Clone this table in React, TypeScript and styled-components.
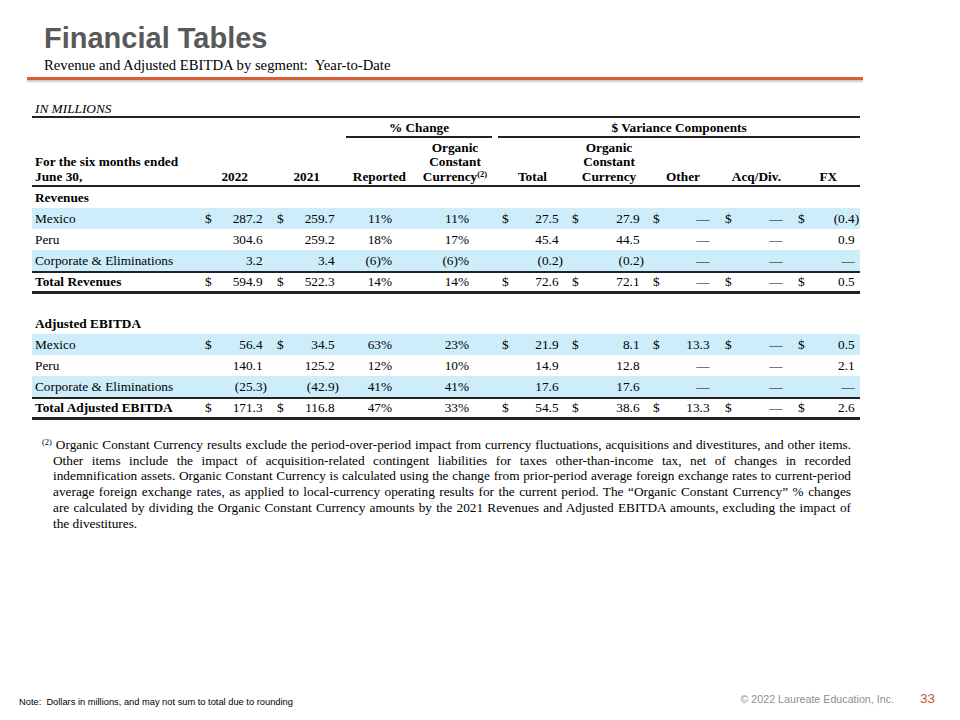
import React from "react";
import styled, { createGlobalStyle } from "styled-components";

const GlobalStyle = createGlobalStyle`
  body {
    margin: 0;
    background: #ffffff;
  }
`;

const Slide = styled.div`
  width: 960px;
  height: 720px;
  display: flex;
  flex-direction: column;
  font-family: "Liberation Serif", "Times New Roman", serif;
  color: #000;
  overflow: hidden;
  background: #fff;
`;

const Header = styled.header`
  padding: 22px 0 0 44px;
`;

const Title = styled.h1`
  margin: 0;
  font-family: "Liberation Sans", Arial, sans-serif;
  font-size: 29px;
  font-weight: 700;
  line-height: 33px;
  color: #595959;
`;

const Subtitle = styled.div`
  margin-top: 2px;
  font-size: 14.7px;
  line-height: 17px;
  white-space: pre;
`;

const Rule = styled.div`
  margin: 3px 97px 0 27px;
  height: 3px;
  background: #d65f35;
  box-shadow: 0 2px 2px rgba(0, 0, 0, 0.22);
`;

const Content = styled.main`
  padding: 21px 0 0 32px;
`;

const Units = styled.div`
  padding-left: 3px;
  font-size: 13.3px;
  line-height: 15px;
  font-style: italic;
`;

const Table = styled.table`
  width: 828px;
  table-layout: fixed;
  border-collapse: separate;
  border-spacing: 0;
  border-top: 2px solid #222;
  font-size: 13.3px;

  td,
  th {
    padding: 0;
  }
`;

const GroupCell = styled.th`
  height: 20px;
  vertical-align: bottom;
`;

const GroupLabel = styled.div<{ $inset: number }>`
  margin-left: ${(p) => p.$inset}px;
  border-bottom: 2px solid #222;
  text-align: center;
  font-weight: 700;
  line-height: 17px;
`;

const HeadCell = styled.th<{
  $align?: "left" | "right" | "center";
  $pr?: number;
  $pl?: number;
}>`
  height: 46px;
  vertical-align: bottom;
  text-align: ${(p) => p.$align || "right"};
  padding-right: ${(p) => p.$pr || 0}px !important;
  padding-left: ${(p) => p.$pl || 0}px !important;
  padding-bottom: 1px !important;
  font-weight: 700;
  line-height: 14.5px;
  border-bottom: 2px solid #222;
  white-space: nowrap;
`;

const Sup = styled.sup`
  font-size: 8.5px;
  line-height: 0;
  vertical-align: 4px;
`;

const BodyRow = styled.tr<{ $band?: boolean; $total?: boolean }>`
  background: ${(p) => (p.$band ? "#cdedfb" : "transparent")};

  td {
    line-height: ${(p) => (p.$total ? "18px" : "21px")};
    border-top: ${(p) => (p.$total ? "2px solid #222" : "0")};
    border-bottom: ${(p) => (p.$total ? "3px solid #222" : "0")};
  }
`;

const SpacerRow = styled.tr`
  height: 19px;
`;

const Label = styled.td<{ $bold?: boolean }>`
  padding-left: 3px !important;
  font-weight: ${(p) => (p.$bold ? 700 : 400)};
  white-space: nowrap;
`;

const Dollar = styled.td<{ $pl: number }>`
  padding-left: ${(p) => p.$pl}px !important;
  text-align: left;
`;

const Num = styled.td<{ $pr: number }>`
  padding-right: ${(p) => p.$pr}px !important;
  text-align: right;
  white-space: nowrap;
`;

const Hidden = styled.span`
  visibility: hidden;
`;

const Footnote = styled.div`
  margin: 17px 0 0 21px;
  width: 798px;
  font-size: 13.3px;
  line-height: 15.7px;
`;

const FootLine = styled.div<{ $last?: boolean; $first?: boolean }>`
  text-align: justify;
  text-align-last: ${(p) => (p.$last ? "left" : "justify")};
  text-indent: ${(p) => (p.$first ? "-11px" : "0")};
  white-space: nowrap;
`;

const FootSup = styled.sup`
  font-size: 8.5px;
  line-height: 0;
  vertical-align: 4px;
`;

const Footer = styled.footer`
  margin-top: auto;
  display: flex;
  align-items: flex-end;
  padding: 0 25px 0 19px;
  font-family: "Liberation Sans", Arial, sans-serif;
`;

const Note = styled.div`
  font-size: 9.3px;
  line-height: 11px;
  margin-bottom: 12px;
  white-space: pre;
`;

const Copyright = styled.div`
  margin-left: auto;
  font-size: 10.7px;
  line-height: 12px;
  margin-bottom: 15px;
  color: #8f8f8f;
`;

const PageNum = styled.div`
  margin-left: 26px;
  font-size: 13.5px;
  line-height: 15px;
  margin-bottom: 14px;
  color: #c9512b;
`;

type Col = { dollarPad?: number; pad: number; pct?: boolean };

const cols: Col[] = [
  { dollarPad: 5, pad: 2 },
  { dollarPad: 8, pad: 2 },
  { pad: 18, pct: true },
  { pad: 23, pct: true },
  { dollarPad: 10, pad: 2 },
  { dollarPad: 7, pad: 1 },
  { dollarPad: 8, pad: 4 },
  { dollarPad: 7, pad: 3 },
  { dollarPad: 8, pad: 1 },
];

const widths = [168, 28, 41, 33, 39, 69, 82, 38, 35, 35, 45, 35, 38, 34, 38, 30, 40];

type Line = {
  label: string;
  band?: boolean;
  total?: boolean;
  dollars?: boolean;
  values: string[];
};

const D = "\u2014";

const revenues: Line[] = [
  {
    label: "Mexico",
    band: true,
    dollars: true,
    values: ["287.2", "259.7", "11%", "11%", "27.5", "27.9", D, D, "(0.4)"],
  },
  {
    label: "Peru",
    values: ["304.6", "259.2", "18%", "17%", "45.4", "44.5", D, D, "0.9"],
  },
  {
    label: "Corporate & Eliminations",
    band: true,
    values: ["3.2", "3.4", "(6)%", "(6)%", "(0.2)", "(0.2)", D, D, D],
  },
  {
    label: "Total Revenues",
    total: true,
    dollars: true,
    values: ["594.9", "522.3", "14%", "14%", "72.6", "72.1", D, D, "0.5"],
  },
];

const ebitda: Line[] = [
  {
    label: "Mexico",
    band: true,
    dollars: true,
    values: ["56.4", "34.5", "63%", "23%", "21.9", "8.1", "13.3", D, "0.5"],
  },
  {
    label: "Peru",
    values: ["140.1", "125.2", "12%", "10%", "14.9", "12.8", D, D, "2.1"],
  },
  {
    label: "Corporate & Eliminations",
    band: true,
    values: ["(25.3)", "(42.9)", "41%", "41%", "17.6", "17.6", D, D, D],
  },
  {
    label: "Total Adjusted EBITDA",
    total: true,
    dollars: true,
    values: ["171.3", "116.8", "47%", "33%", "54.5", "38.6", "13.3", D, "2.6"],
  },
];

const renderValue = (v: string, pct?: boolean) => {
  if (pct || v.endsWith(")")) return v;
  return (
    <>
      {v}
      <Hidden>)</Hidden>
    </>
  );
};

const DataRow = ({ line }: { line: Line }) => (
  <BodyRow $band={line.band} $total={line.total}>
    <Label $bold={line.total}>{line.label}</Label>
    {cols.map((c, i) => (
      <React.Fragment key={i}>
        {c.dollarPad !== undefined && (
          <Dollar $pl={c.dollarPad}>{line.dollars ? "$" : ""}</Dollar>
        )}
        <Num $pr={c.pad}>{renderValue(line.values[i], c.pct)}</Num>
      </React.Fragment>
    ))}
  </BodyRow>
);

const SectionRow = ({ title }: { title: string }) => (
  <BodyRow>
    <Label $bold colSpan={17}>
      {title}
    </Label>
  </BodyRow>
);

const footLines = [
  "Organic Constant Currency results exclude the period-over-period impact from currency fluctuations, acquisitions and divestitures, and other items.",
  "Other items include the impact of acquisition-related contingent liabilities for taxes other-than-income tax, net of changes in recorded",
  "indemnification assets. Organic Constant Currency is calculated using the change from prior-period average foreign exchange rates to current-period",
  "average foreign exchange rates, as applied to local-currency operating results for the current period. The \u201cOrganic Constant Currency\u201d % changes",
  "are calculated by dividing the Organic Constant Currency amounts by the 2021 Revenues and Adjusted EBITDA amounts, excluding the impact of",
  "the divestitures.",
];

export default function App() {
  return (
    <Slide>
      <GlobalStyle />
      <Header>
        <Title>Financial Tables</Title>
        <Subtitle>Revenue and Adjusted EBITDA by segment:  Year-to-Date</Subtitle>
      </Header>
      <Rule />

      <Content>
        <Units>IN MILLIONS</Units>
        <Table>
          <colgroup>
            {widths.map((w, i) => (
              <col key={i} style={{ width: w }} />
            ))}
          </colgroup>
          <thead>
            <tr>
              <GroupCell colSpan={5} />
              <GroupCell colSpan={2}>
                <GroupLabel $inset={5}>% Change</GroupLabel>
              </GroupCell>
              <GroupCell colSpan={10}>
                <GroupLabel $inset={6}>$ Variance Components</GroupLabel>
              </GroupCell>
            </tr>
            <tr>
              <HeadCell $align="left" $pl={3}>
                For the six months ended
                <br />
                June 30,
              </HeadCell>
              <HeadCell colSpan={2} $pr={21}>2022</HeadCell>
              <HeadCell colSpan={2} $pr={21}>2021</HeadCell>
              <HeadCell $pr={4}>Reported</HeadCell>
              <HeadCell $align="center" $pl={8}>
                Organic
                <br />
                Constant
                <br />
                Currency<Sup>(2)</Sup>
              </HeadCell>
              <HeadCell colSpan={2} $pr={18}>Total</HeadCell>
              <HeadCell colSpan={2} $align="center" $pl={8}>
                Organic
                <br />
                Constant
                <br />
                Currency
              </HeadCell>
              <HeadCell colSpan={2} $pr={18}>Other</HeadCell>
              <HeadCell colSpan={2} $pr={9}>Acq/Div.</HeadCell>
              <HeadCell colSpan={2} $pr={23}>FX</HeadCell>
            </tr>
          </thead>
          <tbody>
            <SectionRow title="Revenues" />
            {revenues.map((l) => (
              <DataRow key={"r" + l.label} line={l} />
            ))}
            <SpacerRow>
              <td colSpan={17} />
            </SpacerRow>
            <SectionRow title="Adjusted EBITDA" />
            {ebitda.map((l) => (
              <DataRow key={"e" + l.label} line={l} />
            ))}
          </tbody>
        </Table>

        <Footnote>
          {footLines.map((t, i) => (
            <FootLine key={i} $first={i === 0} $last={i === footLines.length - 1}>
              {i === 0 && <FootSup>(2)</FootSup>}
              {i === 0 ? " " : ""}
              {t}
            </FootLine>
          ))}
        </Footnote>
      </Content>

      <Footer>
        <Note>Note:  Dollars in millions, and may not sum to total due to rounding</Note>
        <Copyright>© 2022 Laureate Education, Inc.</Copyright>
        <PageNum>33</PageNum>
      </Footer>
    </Slide>
  );
}
